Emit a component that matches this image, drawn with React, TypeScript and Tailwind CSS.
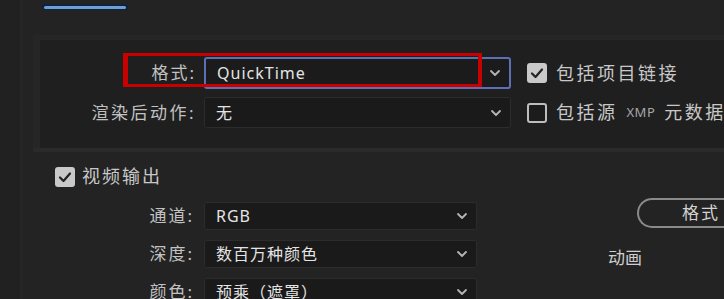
import React from "react";

const cjk = { fontFamily: '"Noto Sans", "Noto Sans CJK SC", sans-serif' };

function Chevron() {
  return (
    <svg width="12" height="8" viewBox="0 0 12 8" className="shrink-0">
      <path d="M2 2 L6 6 L10 2" fill="none" stroke="#b5b5b5" strokeWidth="1.8" strokeLinecap="round" strokeLinejoin="round" />
    </svg>
  );
}

function Check({ checked }: { checked: boolean }) {
  return checked ? (
    <div className="w-[20px] h-[20px] rounded-[3px] bg-[#c9c9c9] flex items-center justify-center shrink-0">
      <svg width="14" height="12" viewBox="0 0 14 12">
        <path d="M2 6.5 L5.5 10 L12 2.5" fill="none" stroke="#222" strokeWidth="2.2" strokeLinecap="round" strokeLinejoin="round" />
      </svg>
    </div>
  ) : (
    <div className="w-[20px] h-[20px] rounded-[3px] border-2 border-[#bdbdbd] bg-[#1c1c1c] shrink-0" />
  );
}

function Select({ value, w, h, active }: { value: string; w: string; h: string; active?: boolean }) {
  return (
    <div
      className={`${w} ${h} flex items-center justify-between pl-[11px] pr-[8px] rounded-[3px] ${
        active ? "border-2 border-[#5d6fb5] bg-[#1b1b1b]" : "border border-[#2c2c2c] bg-[#1a1a1a]"
      }`}
    >
      <span className="text-[16px] text-[#e4e4e4] tracking-[1px]">{value}</span>
      <Chevron />
    </div>
  );
}

export default function App() {
  return (
    <div className="w-[724px] h-[299px] bg-[#232323] overflow-hidden relative flex" style={cjk}>
      <div className="w-[22px] h-full bg-[#212121] border-r-2 border-[#262626] shrink-0" />
      <div className="flex-1 flex flex-col">
        <div className="h-[35px] shrink-0">
          <div className="ml-[20px] mt-[4px] w-[86px] h-[6px] rounded-[3px] bg-[#11213a] flex items-center px-[2px]">
            <div className="w-full h-[3px] bg-[#6aa0d6] rounded-full" />
          </div>
        </div>
        <div className="ml-[11px] h-[113px] shrink-0 bg-[#1f1f1f] border-t-[5px] border-l-[7px] border-[#262626] flex flex-col pt-[17px] gap-[8px]">
          <div className="flex items-center">
            <div className="w-[156px] text-right text-[17px] text-[#c2c2c2] tracking-[2px]">格式:</div>
            <div className="ml-[8px]">
              <Select value="QuickTime" w="w-[307px]" h="h-[32px]" active />
            </div>
            <div className="ml-[16px] flex items-center gap-[9px]">
              <Check checked />
              <span className="text-[18px] text-[#c8c8c8] tracking-[2.5px] whitespace-nowrap">包括项目链接</span>
            </div>
          </div>
          <div className="flex items-center">
            <div className="w-[156px] text-right text-[17px] text-[#c2c2c2] tracking-[2.5px] whitespace-nowrap">渲染后动作:</div>
            <div className="ml-[8px]">
              <Select value="无" w="w-[307px]" h="h-[31px]" />
            </div>
            <div className="ml-[16px] flex items-center gap-[9px] whitespace-nowrap">
              <Check checked={false} />
              <span className="text-[18px] text-[#c8c8c8] tracking-[2.5px]">包括源</span>
              <span className="text-[13px] text-[#a8a8a8] tracking-[0.5px]">XMP</span>
              <span className="text-[18px] text-[#c8c8c8] tracking-[2.5px]">元数据</span>
            </div>
          </div>
        </div>
        <div className="ml-[11px] flex-1 border-t-[4px] border-[#2a2a2a] flex">
          <div className="flex flex-col pl-[22px] pt-[11px]">
            <div className="flex items-center gap-[7px]">
              <Check checked />
              <span className="text-[18px] text-[#c8c8c8] tracking-[2px]">视频输出</span>
            </div>
            <div className="flex flex-col gap-[10px] mt-[12px]">
              {[
                ["通道:", "RGB"],
                ["深度:", "数百万种颜色"],
                ["颜色:", "预乘（遮罩）"],
              ].map(([l, v]) => (
                <div key={l} className="flex items-center">
                  <div className="w-[139px] text-right text-[17px] text-[#c2c2c2] tracking-[2px]">{l}</div>
                  <div className="ml-[10px]">
                    <Select value={v} w="w-[273px]" h="h-[28px]" />
                  </div>
                </div>
              ))}
            </div>
          </div>
          <div className="ml-[131px] pt-[46px] flex flex-col">
            <div className="ml-[29px] w-[120px] h-[30px] rounded-l-full border-2 border-r-0 border-[#8a8a8a] flex items-center pl-[43px]">
              <span className="text-[17px] text-[#d2d2d2] tracking-[2px] whitespace-nowrap">格式</span>
            </div>
            <div className="mt-[17px] text-[17px] text-[#cfcfcf]">动画</div>
          </div>
        </div>
      </div>
      <div className="absolute left-[123px] top-[53px] w-[359px] h-[34px] border-[3px] border-l-[5px] border-r-[4px] border-[#c80000] pointer-events-none" />
    </div>
  );
}
